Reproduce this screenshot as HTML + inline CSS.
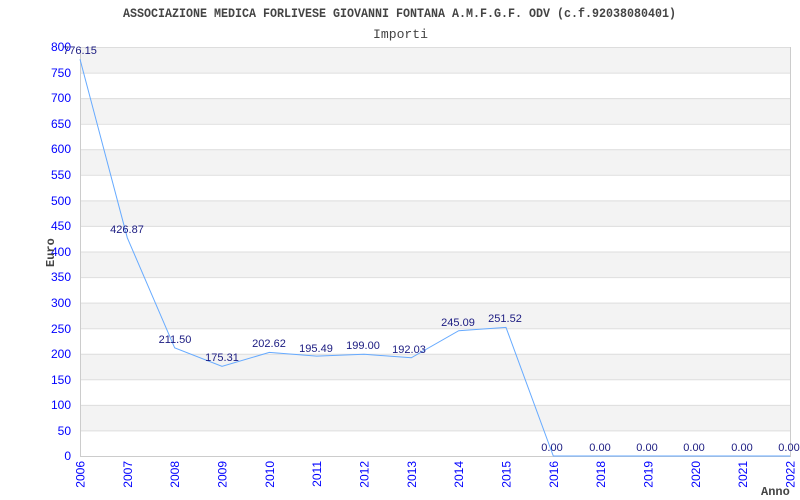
<!DOCTYPE html>
<html><head><meta charset="utf-8"><style>
html,body{margin:0;padding:0;background:#fff;width:800px;height:500px;overflow:hidden}
svg{display:block}
.t{font-family:"Liberation Sans",sans-serif;font-size:12px;fill:#0000ff}
.l{font-family:"Liberation Sans",sans-serif;font-size:11px;fill:#1a1a80;text-anchor:middle}
.m{font-family:"Liberation Mono",monospace;fill:#444}
</style></head><body>
<svg width="800" height="500" viewBox="0 0 800 500" xmlns="http://www.w3.org/2000/svg">
<g fill="#f3f3f3">
<rect x="80" y="47" width="710" height="25.6"/>
<rect x="80" y="98.1" width="710" height="25.6"/>
<rect x="80" y="149.2" width="710" height="25.6"/>
<rect x="80" y="200.4" width="710" height="25.6"/>
<rect x="80" y="251.5" width="710" height="25.6"/>
<rect x="80" y="302.6" width="710" height="25.6"/>
<rect x="80" y="353.8" width="710" height="25.6"/>
<rect x="80" y="404.9" width="710" height="25.6"/>
</g>
<g stroke="#dddddd" stroke-width="1">
<line x1="80" x2="790" y1="47.5" y2="47.5"/><line x1="80" x2="790" y1="73.1" y2="73.1"/><line x1="80" x2="790" y1="98.6" y2="98.6"/><line x1="80" x2="790" y1="124.2" y2="124.2"/><line x1="80" x2="790" y1="149.7" y2="149.7"/><line x1="80" x2="790" y1="175.3" y2="175.3"/><line x1="80" x2="790" y1="200.9" y2="200.9"/><line x1="80" x2="790" y1="226.4" y2="226.4"/><line x1="80" x2="790" y1="252" y2="252"/><line x1="80" x2="790" y1="277.6" y2="277.6"/><line x1="80" x2="790" y1="303.1" y2="303.1"/><line x1="80" x2="790" y1="328.7" y2="328.7"/><line x1="80" x2="790" y1="354.3" y2="354.3"/><line x1="80" x2="790" y1="379.8" y2="379.8"/><line x1="80" x2="790" y1="405.4" y2="405.4"/><line x1="80" x2="790" y1="430.9" y2="430.9"/>
</g>
<g stroke="#cccccc" stroke-width="1" fill="none">
<line x1="80.5" y1="47" x2="80.5" y2="456.5"/><line x1="790.5" y1="47" x2="790.5" y2="456.5"/><line x1="80" y1="456.5" x2="791" y2="456.5"/>
</g>
<polyline fill="none" stroke="#66aaff" stroke-width="1" points="80,59.2 127.3,237.8 174.7,347.9 222,366.4 269.3,352.4 316.7,356.1 364,354.3 411.3,357.8 458.7,330.7 506,327.4 553.3,456 600.7,456 648,456 695.3,456 742.7,456 790,456"/>
<g class="t" text-anchor="end">
<text x="71" y="51">800</text><text x="71" y="77">750</text><text x="71" y="102">700</text><text x="71" y="128">650</text><text x="71" y="153">600</text><text x="71" y="179">550</text><text x="71" y="205">500</text><text x="71" y="230">450</text><text x="71" y="256">400</text><text x="71" y="281">350</text><text x="71" y="307">300</text><text x="71" y="333">250</text><text x="71" y="358">200</text><text x="71" y="384">150</text><text x="71" y="409">100</text><text x="71" y="435">50</text><text x="71" y="460">0</text>
</g>
<g class="t" text-anchor="end">
<text transform="translate(84.5,461) rotate(-90)">2006</text>
<text transform="translate(131.8,461) rotate(-90)">2007</text>
<text transform="translate(179.2,461) rotate(-90)">2008</text>
<text transform="translate(226.5,461) rotate(-90)">2009</text>
<text transform="translate(273.8,461) rotate(-90)">2010</text>
<text transform="translate(321.2,461) rotate(-90)">2011</text>
<text transform="translate(368.5,461) rotate(-90)">2012</text>
<text transform="translate(415.8,461) rotate(-90)">2013</text>
<text transform="translate(463.2,461) rotate(-90)">2014</text>
<text transform="translate(510.5,461) rotate(-90)">2015</text>
<text transform="translate(557.8,461) rotate(-90)">2016</text>
<text transform="translate(605.2,461) rotate(-90)">2018</text>
<text transform="translate(652.5,461) rotate(-90)">2019</text>
<text transform="translate(699.8,461) rotate(-90)">2020</text>
<text transform="translate(747.2,461) rotate(-90)">2021</text>
<text transform="translate(794.5,461) rotate(-90)">2022</text>
</g>
<g class="l">
<text x="80" y="54">776.15</text>
<text x="127" y="233">426.87</text>
<text x="175" y="343">211.50</text>
<text x="222" y="361">175.31</text>
<text x="269" y="347">202.62</text>
<text x="316" y="352">195.49</text>
<text x="363" y="349">199.00</text>
<text x="409" y="353">192.03</text>
<text x="458" y="326">245.09</text>
<text x="505" y="322">251.52</text>
<text x="552" y="451">0.00</text>
<text x="600" y="451">0.00</text>
<text x="647" y="451">0.00</text>
<text x="694" y="451">0.00</text>
<text x="742" y="451">0.00</text>
<text x="789" y="451">0.00</text>
</g>
<text class="m" x="123" y="17" font-size="13" font-weight="bold" textLength="553" lengthAdjust="spacingAndGlyphs">ASSOCIAZIONE MEDICA FORLIVESE GIOVANNI FONTANA A.M.F.G.F. ODV (c.f.92038080401)</text>
<text class="m" x="373" y="38" font-size="13" textLength="55" lengthAdjust="spacingAndGlyphs">Importi</text>
<text class="m" font-size="12" font-weight="bold" transform="translate(54,267) rotate(-90)">Euro</text>
<text class="m" x="761" y="495" font-size="12" font-weight="bold">Anno</text>
</svg>
</body></html>
